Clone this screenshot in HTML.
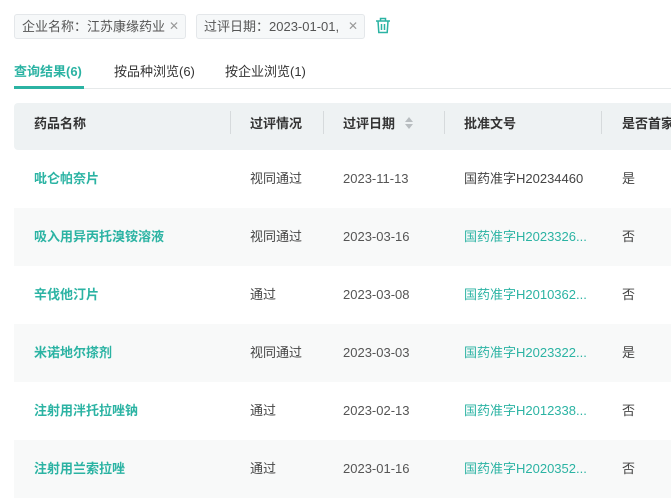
<!DOCTYPE html>
<html><head><meta charset="utf-8"><style>
*{margin:0;padding:0;box-sizing:border-box}
body{width:671px;height:498px;overflow:hidden;background:#fff;font-family:"Liberation Sans","Noto Sans CJK SC",sans-serif;font-size:13px;color:#333;position:relative}
.tag{position:absolute;top:14px;height:25px;border:1px solid #e4e7ea;background:#f6f8f9;border-radius:3px;color:#555;font-size:13px;line-height:23px;padding-left:7px;white-space:nowrap;overflow:hidden}
.tag .x{position:absolute;right:6px;top:0;color:#999;font-size:12px}
.tabs{position:absolute;top:62px;left:14px;font-size:13px;color:#333}
.tabs span{position:absolute;white-space:nowrap;top:0;line-height:20px}
.line{position:absolute;left:14px;right:0;top:88px;height:1px;background:#e6e9ea}
.ul{position:absolute;left:14px;top:86px;width:70px;height:3px;background:#2bb3a3}
.hd{position:absolute;left:14px;top:103px;width:680px;height:47px;background:#eef2f3;border-radius:4px 0 0 4px;font-weight:bold;color:#333}
.hd span{position:absolute;white-space:nowrap;top:0;line-height:41px}
.row span{position:absolute;white-space:nowrap;top:0;line-height:58px;color:#444}
.sep{position:absolute;top:8px;width:1px;height:23px;background:#d6dadc}
.row{position:absolute;left:14px;width:680px;height:58px}
.row.g{background:#f8f9f9}
.row span.t{color:#2bb3a3}
.row span.nm{font-weight:bold;color:#2bb3a3}
.row span.d{color:#555}
</style></head><body>
<div class="tag" style="left:14px;width:172px">企业名称：江苏康缘药业<span class="x">✕</span></div>
<div class="tag" style="left:196px;width:169px">过评日期：2023-01-01,<span class="x">✕</span></div>
<svg style="position:absolute;left:375px;top:17px" width="16" height="17" viewBox="0 0 16 17" fill="none" stroke="#2bb3a3" stroke-width="1.5"><path d="M1 4h14M5.5 4V1.5h5V4M3 4l.8 11.5h8.4L13 4M6.5 7v6M9.5 7v6"/></svg>
<div class="tabs"><span style="left:0;color:#2bb3a3;font-weight:bold">查询结果(6)</span><span style="left:100px">按品种浏览(6)</span><span style="left:211px">按企业浏览(1)</span></div>
<div class="line"></div><div class="ul"></div>
<div class="hd">
<span style="left:20px">药品名称</span>
<div class="sep" style="left:216px"></div><span style="left:236px">过评情况</span>
<div class="sep" style="left:309px"></div><span style="left:329px">过评日期</span>
<svg style="position:absolute;left:390px;top:13px" width="10" height="14" viewBox="0 0 10 14"><path d="M5 1L9 6H1z M5 13L1 8h8z" fill="#b8bdc0"/></svg>
<div class="sep" style="left:430px"></div><span style="left:450px">批准文号</span>
<div class="sep" style="left:587px"></div><span style="left:608px">是否首家</span>
</div>
<div class="row" style="top:150px"><span class="nm" style="left:20px">吡仑帕奈片</span><span style="left:236px">视同通过</span><span class="d" style="left:329px">2023-11-13</span><span style="left:450px">国药准字H20234460</span><span style="left:608px">是</span></div>
<div class="row g" style="top:208px"><span class="nm" style="left:20px">吸入用异丙托溴铵溶液</span><span style="left:236px">视同通过</span><span class="d" style="left:329px">2023-03-16</span><span class="t" style="left:450px">国药准字H2023326...</span><span style="left:608px">否</span></div>
<div class="row" style="top:266px"><span class="nm" style="left:20px">辛伐他汀片</span><span style="left:236px">通过</span><span class="d" style="left:329px">2023-03-08</span><span class="t" style="left:450px">国药准字H2010362...</span><span style="left:608px">否</span></div>
<div class="row g" style="top:324px"><span class="nm" style="left:20px">米诺地尔搽剂</span><span style="left:236px">视同通过</span><span class="d" style="left:329px">2023-03-03</span><span class="t" style="left:450px">国药准字H2023322...</span><span style="left:608px">是</span></div>
<div class="row" style="top:382px"><span class="nm" style="left:20px">注射用泮托拉唑钠</span><span style="left:236px">通过</span><span class="d" style="left:329px">2023-02-13</span><span class="t" style="left:450px">国药准字H2012338...</span><span style="left:608px">否</span></div>
<div class="row g" style="top:440px"><span class="nm" style="left:20px">注射用兰索拉唑</span><span style="left:236px">通过</span><span class="d" style="left:329px">2023-01-16</span><span class="t" style="left:450px">国药准字H2020352...</span><span style="left:608px">否</span></div>
</body></html>
